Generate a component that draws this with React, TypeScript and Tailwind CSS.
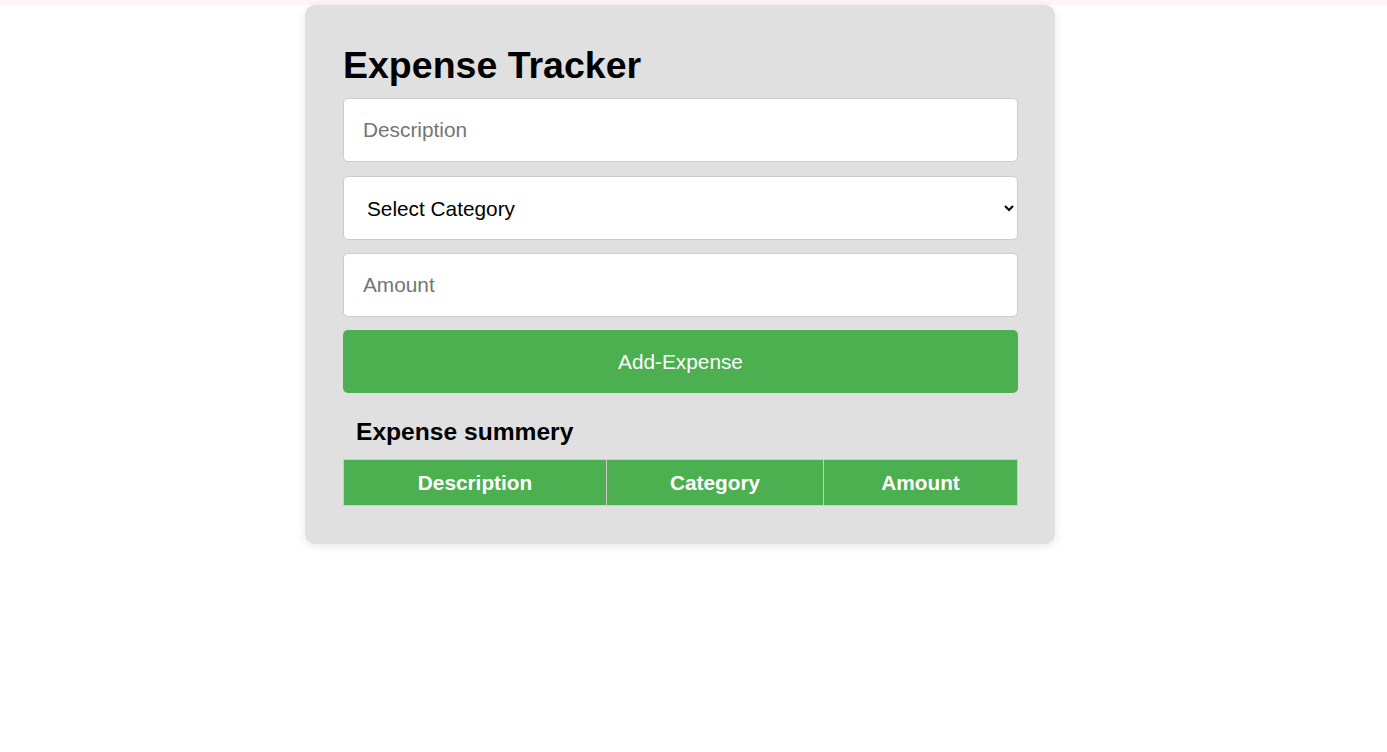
import React from "react";

export default function App() {
  return (
    <div className="min-h-[752px] bg-white" style={{ fontFamily: '"Liberation Sans", Arial, sans-serif' }}>
      <div className="h-[5px] bg-[#fcf6f6]" />
      <div className="pl-[305px]">
        <div className="w-[750px] rounded-[10px] bg-[#e0e0e0] pl-[38px] pr-[37px] pt-[39px] pb-[38px] shadow-[0_2px_10px_rgba(0,0,0,0.1)]">
          <h1 className="mb-[12px] text-[37.5px] font-bold leading-[42px] text-black">Expense Tracker</h1>
          <div className="flex flex-col">
            <input
              type="text"
              placeholder="Description"
              className="h-[64px] w-full rounded-[5px] border border-[#cccccc] bg-white px-[19px] text-[20.8px] text-black outline-none placeholder:text-[#757575]"
            />
            <select
              defaultValue=""
              className="mt-[14px] h-[64px] w-full rounded-[5px] border border-[#cccccc] bg-white px-[19px] text-[20.8px] text-black outline-none"
            >
              <option value="">Select Category</option>
              <option value="food">Food</option>
              <option value="travel">Travel</option>
              <option value="shopping">Shopping</option>
            </select>
            <input
              type="number"
              placeholder="Amount"
              className="mt-[13px] h-[64px] w-full rounded-[5px] border border-[#cccccc] bg-white px-[19px] text-[20.8px] text-black outline-none placeholder:text-[#757575]"
            />
            <button className="mt-[13px] h-[63px] w-full rounded-[5px] bg-[#4caf50] text-[20.8px] text-white">Add-Expense</button>
          </div>
          <h3 className="mt-[24px] mb-[13px] pl-[13px] text-[24.6px] font-bold leading-[29px] text-black">Expense summery</h3>
          <table className="w-full table-fixed border-collapse">
            <thead>
              <tr className="bg-[#4caf50] text-white">
                <th className="h-[46px] w-[263px] border border-[#cccccc] text-[20.8px] font-bold leading-[24px]">Description</th>
                <th className="h-[46px] w-[217px] border border-[#cccccc] text-[20.8px] font-bold leading-[24px]">Category</th>
                <th className="h-[46px] border border-[#cccccc] text-[20.8px] font-bold leading-[24px]">Amount</th>
              </tr>
            </thead>
            <tbody />
          </table>
        </div>
      </div>
    </div>
  );
}
